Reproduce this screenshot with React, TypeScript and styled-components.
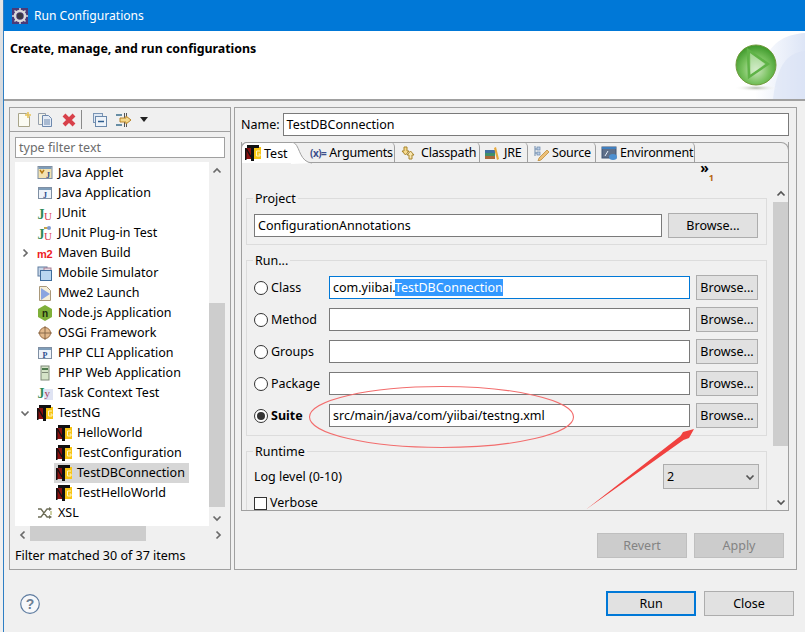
import React from 'react';
import styled, { createGlobalStyle } from 'styled-components';

const FONT = `"Noto Sans", "Open Sans", sans-serif`;

const Global = createGlobalStyle`
  html, body { margin: 0; padding: 0; background: #f0f0f0; }
  body { font-family: ${FONT}; font-size: 12.5px; color: #000; overflow: hidden; }
  * { box-sizing: border-box; }
`;

const Page = styled.div`
  position: relative;
  display: flex;
  width: 805px;
  height: 632px;
  overflow: hidden;
`;

const Desktop = styled.div`
  width: 3px;
  flex: none;
  background: linear-gradient(#e6e6e6 0, #d5d9de 100px, #e9e9e9 230px, #f0f0f0 340px);
`;

const Win = styled.div`
  flex: 1;
  min-width: 0;
  display: flex;
  flex-direction: column;
  border-left: 1px solid #2f7fc4;
  background: #f0f0f0;
`;

const TitleBar = styled.div`
  height: 31px;
  flex: none;
  display: flex;
  align-items: center;
  gap: 6px;
  padding-left: 8px;
  background: #0078d7;
  color: #fff;
  font-size: 12.1px;
`;

const Banner = styled.div`
  height: 70px;
  flex: none;
  display: flex;
  justify-content: space-between;
  background: #fff;
  border-bottom: 2px solid #a0a0a0;
`;

const BannerTitle = styled.div`
  padding: 9px 0 0 6px;
  font-weight: 700;
  font-size: 12.4px;
  line-height: 18px;
`;

const Body = styled.div`
  display: flex;
  flex: none;
  gap: 3px;
  padding: 6px 8px 0 5px;
`;

const Panel = styled.div<{ $w: number }>`
  width: ${p => p.$w}px;
  height: 463px;
  flex: none;
  border: 1px solid #a0a0a0;
  display: flex;
  flex-direction: column;
`;

const Toolbar = styled.div`
  height: 24px;
  flex: none;
  display: flex;
  align-items: center;
  border-bottom: 1px solid #a0a0a0;
`;

const ToolIcon = styled.span<{ $left: number }>`
  display: flex;
  margin-left: ${p => p.$left}px;
`;

const ToolSep = styled.span`
  width: 1px;
  height: 19px;
  margin-left: 4px;
  background: #8a8a8a;
`;

const FilterBox = styled.div`
  height: 21px;
  flex: none;
  margin: 5px 5px 0;
  border: 1px solid #a0a0a0;
  background: #fff;
  color: #6d6d6d;
  padding-left: 3px;
  line-height: 19px;
`;

const TreeArea = styled.div`
  height: 364px;
  flex: none;
  margin: 4px 5px 0;
  display: flex;
  background: #fff;
`;

const TreeList = styled.div`
  flex: 1;
  min-width: 0;
  padding-top: 1px;
`;

const TreeRow = styled.div<{ $child?: boolean }>`
  height: 20px;
  display: flex;
  align-items: center;
  padding-left: ${p => (p.$child ? 39 : 5)}px;
  white-space: nowrap;
`;

const Twist = styled.span`
  width: 15px;
  flex: none;
  display: flex;
`;

const TreeLabel = styled.span<{ $selected?: boolean }>`
  height: 20px;
  display: flex;
  align-items: center;
  gap: 5px;
  padding: 0 4px 0 2px;
  background: ${p => (p.$selected ? '#d6d6d6' : 'transparent')};
`;

const TreeText = styled.span`
  line-height: 20px;
`;

const VBar = styled.div<{ $w: number }>`
  width: ${p => p.$w}px;
  flex: none;
  display: flex;
  flex-direction: column;
  background: #f0f0f0;
`;

const HBar = styled.div`
  height: 15px;
  flex: none;
  margin: 0 5px;
  display: flex;
  align-items: stretch;
  background: #f0f0f0;
`;

const BarArrow = styled.span`
  flex: none;
  display: flex;
  align-items: center;
  justify-content: center;
  min-width: 15px;
  min-height: 17px;
`;

const BarGap = styled.span<{ $grow?: boolean; $size?: number }>`
  flex: ${p => (p.$grow ? '1' : 'none')};
  height: ${p => p.$size ?? 0}px;
`;

const Thumb = styled.span<{ $w?: number; $h?: number }>`
  flex: none;
  display: block;
  background: #cdcdcd;
  width: ${p => (p.$w ? `${p.$w}px` : 'auto')};
  height: ${p => (p.$h ? `${p.$h}px` : 'auto')};
`;

const Status = styled.div`
  padding: 6px 0 0 5px;
  line-height: 18px;
  white-space: nowrap;
`;

const RightInner = styled.div`
  display: flex;
  flex-direction: column;
  padding: 5px 7px 0 6px;
  height: 100%;
`;

const NameRow = styled.div`
  display: flex;
  align-items: center;
  gap: 3px;
`;

const Field = styled.div<{ $w?: number; $focus?: boolean }>`
  height: 23px;
  ${p => (p.$w ? `width: ${p.$w}px;` : 'flex: 1;')}
  min-width: 0;
  background: #fff;
  border: 1px solid ${p => (p.$focus ? '#0078d7' : '#7a7a7a')};
  padding-left: 3px;
  line-height: 21px;
  white-space: nowrap;
`;

const Selected = styled.span`
  background: #3399ff;
  color: #fff;
`;

const Folder = styled.div`
  margin-top: 6px;
  height: 369px;
  flex: none;
  border-left: 1px solid #a0a0a0;
  border-right: 1px solid #a0a0a0;
  border-bottom: 1px solid #a0a0a0;
  display: flex;
  flex-direction: column;
`;

const TabStrip = styled.div`
  height: 21px;
  flex: none;
  margin: 0 -1px;
  display: flex;
  border-top: 1px solid #a0a0a0;
  border-right: 1px solid #a0a0a0;
  border-bottom: 1px solid #a0a0a0;
  border-top-right-radius: 8px;
  border-top-left-radius: 6px;
`;

const Tab = styled.div<{ $w: number; $pad?: number; $gap?: number }>`
  width: ${p => p.$w}px;
  height: 21px;
  margin-top: -1px;
  flex: none;
  display: flex;
  align-items: center;
  gap: ${p => p.$gap ?? 4}px;
  padding-left: ${p => p.$pad ?? 5}px;
  white-space: nowrap;
  letter-spacing: -0.2px;
  border-right: 1px solid #a0a0a0;
  border-top-right-radius: 5px;
`;

const ActiveTab = styled.div`
  position: relative;
  width: 69px;
  height: 21px;
  margin-top: -1px;
  flex: none;
  z-index: 1;
  display: flex;
  align-items: center;
  gap: 3px;
  padding-left: 3px;
  white-space: nowrap;
  border-left: 1px solid #a0a0a0;
  border-top: 1px solid #a0a0a0;
  border-top-left-radius: 6px;
  background: linear-gradient(90deg, #fff 0, #fff 52px, transparent 52px);
`;

const TabCurve = styled.svg`
  position: absolute;
  right: -3px;
  top: -1px;
`;

const ArgsGlyph = styled.span`
  color: #3d4f8c;
  font-weight: 700;
  font-size: 10px;
  letter-spacing: -0.5px;
`;

const StripExtra = styled.div`
  height: 22px;
  flex: none;
  display: flex;
  justify-content: flex-end;
  padding-right: 74px;
`;

const Overflow = styled.div`
  display: flex;
  align-items: flex-start;
  font-weight: 700;
  font-size: 14px;
  line-height: 9px;
`;

const OverflowCount = styled.span`
  color: #b5660d;
  font-weight: 700;
  font-size: 9px;
  margin-top: 10px;
  line-height: 9px;
`;

const FolderBody = styled.div`
  flex: 1;
  min-height: 0;
  display: flex;
`;

const ScrollContent = styled.div`
  flex: 1;
  min-width: 0;
  overflow: hidden;
  padding: 5px 6px 0 4px;
`;

const Group = styled.fieldset<{ $top?: number; $bottom?: number }>`
  margin: 0 0 7px;
  border: 1px solid #dcdcdc;
  padding: ${p => p.$top ?? 6}px 8px ${p => p.$bottom ?? 7}px 7px;
  min-width: 0;
`;

const Legend = styled.legend`
  margin-left: -1px;
  padding: 0 2px;
  line-height: 17px;
  font-size: 12.5px;
`;

const FlexRow = styled.div`
  display: flex;
  gap: 6px;
  align-items: center;
`;

const RunGrid = styled.div`
  display: grid;
  grid-template-columns: 75px 361px 68px;
  row-gap: 7px;
  align-items: center;
`;

const BrowseCell = styled.div`
  margin-left: 6px;
  width: 62px;
`;

const Btn = styled.button<{ $w?: number; $default?: boolean }>`
  width: ${p => p.$w ?? 90}px;
  height: 25px;
  flex: none;
  padding: 0;
  font: inherit;
  color: #000;
  background: #e1e1e1;
  border: ${p => (p.$default ? '2px solid #0078d7' : '1px solid #adadad')};
  border-radius: 0;
  &:disabled {
    background: #cccccc;
    border-color: #bfbfbf;
    color: #838383;
  }
`;

const Choice = styled.label<{ $on?: boolean }>`
  display: flex;
  align-items: center;
  gap: 3px;
  line-height: 14px;
  font-weight: ${p => (p.$on ? 700 : 400)};
`;

const Radio = styled.span<{ $on?: boolean }>`
  width: 14px;
  height: 14px;
  flex: none;
  border-radius: 50%;
  background: #fff;
  border: 1px solid #333;
  display: flex;
  align-items: center;
  justify-content: center;
  &::after {
    content: '';
    display: ${p => (p.$on ? 'block' : 'none')};
    width: 8px;
    height: 8px;
    border-radius: 50%;
    background: #333;
  }
`;

const Check = styled.span`
  width: 13px;
  height: 13px;
  flex: none;
  background: #fff;
  border: 1px solid #333;
`;

const LogRow = styled.div`
  display: flex;
  justify-content: space-between;
  align-items: center;
  height: 25px;
  margin-right: -1px;
`;

const Select = styled.div`
  width: 96px;
  height: 25px;
  background: #e1e1e1;
  border: 1px solid #adadad;
  display: flex;
  align-items: center;
  justify-content: space-between;
  padding: 0 3px;
`;

const VerboseRow = styled.div`
  margin-top: 7px;
`;

const ApplyRow = styled.div`
  display: flex;
  justify-content: flex-end;
  gap: 7px;
  margin-top: 22px;
  padding-right: 5px;
`;

const Footer = styled.div`
  display: flex;
  align-items: center;
  padding: 21px 11px 0 16px;
  gap: 8px;
`;

const FooterSpace = styled.div`
  flex: 1;
`;

const Annotation = styled.svg`
  position: absolute;
  left: 0;
  top: 0;
  pointer-events: none;
`;

const Small = ({ children, w = 16, h = 16 }: { children: React.ReactNode; w?: number; h?: number }) => (
  <svg width={w} height={h} viewBox={`0 0 ${w} ${h}`} style={{ flex: 'none', display: 'block' }}>{children}</svg>
);

const TestNG = () => (
  <Small>
    <rect x="0" y="3" width="6" height="11" fill="#8a0f0f" />
    <path d="M0 3h1.500v12H0z" fill="#111" />
    <path d="M1.500 4l4.500 8" stroke="#111" strokeWidth="1.400" />
    <rect x="9" y="2" width="7" height="12" fill="#f7c514" />
    <path d="M2 0h12v3H2z" fill="#111" />
    <path d="M6 2h3v14H6z" fill="#111" />
    <path d="M15 6h-3.500v5H15V9h-1.500" fill="none" stroke="#fff6c4" strokeWidth="1" />
  </Small>
);

const WinIcon = ({ letter, bar = '#7f9db9' }: { letter: string; bar?: string }) => (
  <Small>
    <rect x="1.500" y="2.500" width="13" height="11" fill="#eef3fa" stroke="#7f8fa3" />
    <rect x="2" y="3" width="12" height="2" fill={bar} />
    <text x="8" y="12.500" fontSize="8" fontWeight="700" fontFamily="Liberation Serif" textAnchor="middle" fill="#2c4c8c">{letter}</text>
  </Small>
);

const AppletIcon = () => (
  <Small>
    <rect x="1" y="1.500" width="14" height="12" fill="#f3e2b0" stroke="#7f8fa3" />
    <rect x="1.500" y="2" width="13" height="2" fill="#7f9db9" />
    <path d="M3 5l2 3 2-3" fill="none" stroke="#b57a14" strokeWidth="1.500" />
    <text x="11" y="12.500" fontSize="8" fontWeight="700" fontFamily="Liberation Serif" textAnchor="middle" fill="#2c4c8c">J</text>
  </Small>
);

const JUnitIcon = ({ plug }: { plug?: boolean }) => (
  <Small>
    {plug && <path d="M7 3h5" stroke="#c9a64a" strokeWidth="2" />}
    {plug && <circle cx="12" cy="3" r="2" fill="#7f9bd1" />}
    <text x="0.500" y="14" fontSize="14" fontWeight="700" fontFamily="Liberation Serif" fill="#2f8a56">J</text>
    <text x="7" y="15" fontSize="11" fontFamily="Liberation Serif" fill="#d9404f">U</text>
  </Small>
);

const MavenIcon = () => (
  <Small>
    <text x="0" y="12.500" fontSize="11" fontWeight="700" fontFamily="Liberation Sans" letterSpacing="-0.3" fill="#ee1c25">m2</text>
  </Small>
);

const MobileIcon = () => (
  <Small>
    <rect x="1" y="2" width="9" height="9" fill="#c7d6e8" stroke="#5f7ca0" />
    <rect x="7" y="3" width="7" height="7" fill="#e7d9e2" stroke="#a77f92" />
    <rect x="3.500" y="5.500" width="11" height="10" fill="#b9d7f0" stroke="#3f6d9c" />
  </Small>
);

const MweIcon = () => (
  <Small>
    <path d="M2.500 1.500h7l4 4v10h-11z" fill="#f6efd9" stroke="#a9987a" />
    <path d="M4 3l9 6-9 6z" fill="#8aa5e0" />
  </Small>
);

const NodeIcon = () => (
  <Small>
    <path d="M8 0l7 4v8l-7 4-7-4V4z" fill="#7fb03a" />
    <text x="8" y="12" fontSize="10" fontWeight="700" fontFamily="Liberation Sans" textAnchor="middle" fill="#1d2b0d">n</text>
  </Small>
);

const OsgiIcon = () => (
  <Small>
    <circle cx="8" cy="8" r="5.500" fill="#e2b98c" stroke="#9a6f47" />
    <path d="M8 1v14M1 8h14" stroke="#8a6a4a" strokeWidth="1" />
  </Small>
);

const PhpWebIcon = () => (
  <Small>
    <rect x="4" y="1" width="8" height="14" fill="#d5e3c8" stroke="#7f8a78" />
    <rect x="5" y="3" width="6" height="2" fill="#4d7a4d" />
    <rect x="5" y="7" width="6" height="1" fill="#7f8a78" />
  </Small>
);

const TaskIcon = () => (
  <Small>
    <rect x="7" y="4" width="9" height="11" fill="#dfe3f3" />
    <text x="0.500" y="13" fontSize="14" fontWeight="700" fontFamily="Liberation Serif" fill="#2f8a56">J</text>
    <text x="7.500" y="12" fontSize="11" fontFamily="Liberation Serif" fill="#a33a5c">y</text>
  </Small>
);

const XslIcon = () => (
  <Small>
    <path d="M1 4h3l6 8h3M1 12h3l6-8h3" fill="none" stroke="#6e6e58" strokeWidth="1.300" />
    <path d="M12 2l3 2-3 2zM12 10l3 2-3 2z" fill="#6e6e58" />
    <path d="M14 6v4" stroke="#9aa04a" strokeWidth="1" />
  </Small>
);

const Chevron = ({ dir, color = '#6a6a6a', size = 10 }: { dir: 'up' | 'down' | 'left' | 'right'; color?: string; size?: number }) => {
  const d = {
    up: 'M1.500 6.500L5 3l3.500 3.500',
    down: 'M1.500 3.500L5 7l3.500-3.500',
    left: 'M6.500 1.500L3 5l3.500 3.500',
    right: 'M3.500 1.500L7 5 3.500 8.500',
  }[dir];
  return (
    <svg width={size} height={size} viewBox="0 0 10 10" style={{ display: 'block' }}>
      <path d={d} fill="none" stroke={color} strokeWidth="1.700" />
    </svg>
  );
};

type Item = { label: string; icon: React.ReactNode; twist?: 'right' | 'down'; child?: boolean; selected?: boolean };

const items: Item[] = [
  { label: 'Java Applet', icon: <AppletIcon /> },
  { label: 'Java Application', icon: <WinIcon letter="J" /> },
  { label: 'JUnit', icon: <JUnitIcon /> },
  { label: 'JUnit Plug-in Test', icon: <JUnitIcon plug /> },
  { label: 'Maven Build', icon: <MavenIcon />, twist: 'right' },
  { label: 'Mobile Simulator', icon: <MobileIcon /> },
  { label: 'Mwe2 Launch', icon: <MweIcon /> },
  { label: 'Node.js Application', icon: <NodeIcon /> },
  { label: 'OSGi Framework', icon: <OsgiIcon /> },
  { label: 'PHP CLI Application', icon: <WinIcon letter="P" /> },
  { label: 'PHP Web Application', icon: <PhpWebIcon /> },
  { label: 'Task Context Test', icon: <TaskIcon /> },
  { label: 'TestNG', icon: <TestNG />, twist: 'down' },
  { label: 'HelloWorld', icon: <TestNG />, child: true },
  { label: 'TestConfiguration', icon: <TestNG />, child: true },
  { label: 'TestDBConnection', icon: <TestNG />, child: true, selected: true },
  { label: 'TestHelloWorld', icon: <TestNG />, child: true },
  { label: 'XSL', icon: <XslIcon /> },
];

const runRows = [
  { label: 'Class', focus: true, value: <>com.yiibai.<Selected>TestDBConnection</Selected></> },
  { label: 'Method' },
  { label: 'Groups' },
  { label: 'Package' },
  { label: 'Suite', on: true, value: 'src/main/java/com/yiibai/testng.xml' },
];

const GearLogo = () => (
  <Small>
    <rect width="16" height="16" fill="#4a3a78" />
    <circle cx="8" cy="8" r="5" fill="none" stroke="#d9d9d9" strokeWidth="2.500" />
    <path d="M8 0v3M8 13v3M0 8h3M13 8h3M2.500 2.500l2 2M11.500 11.500l2 2M13.500 2.500l-2 2M4.500 11.500l-2 2" stroke="#d9d9d9" strokeWidth="1.500" />
    <circle cx="8" cy="8" r="3" fill="#3a3a44" />
  </Small>
);

const BannerArt = () => (
  <svg width="90" height="68" viewBox="0 0 90 68" style={{ display: 'block' }}>
    <defs>
      <linearGradient id="wash" x1="0" x2="1" y1="0" y2="0">
        <stop offset="0" stopColor="#ffffff" />
        <stop offset="1" stopColor="#dde5f6" />
      </linearGradient>
      <radialGradient id="ball" cx="0.5" cy="0.62" r="0.6">
        <stop offset="0" stopColor="#cfe8c2" />
        <stop offset="0.55" stopColor="#79c25f" />
        <stop offset="1" stopColor="#3f9a2c" />
      </radialGradient>
      <radialGradient id="shade" cx="0.5" cy="0.5" r="0.5">
        <stop offset="0" stopColor="#b5bcae" />
        <stop offset="1" stopColor="#ffffff" stopOpacity="0" />
      </radialGradient>
    </defs>
    <path d="M90 2C60 4 46 20 40 68h50z" fill="url(#wash)" />
    <path d="M90 20C72 22 62 34 58 68h32z" fill="#dbe3f5" opacity=".6" />
    <ellipse cx="41" cy="57" rx="22" ry="3.500" fill="url(#shade)" />
    <circle cx="41" cy="34" r="20" fill="url(#ball)" stroke="#6f9a3a" strokeWidth="1" />
    <path d="M33 19l20 14-19 13z" fill="none" stroke="#5fb347" strokeWidth="2.500" />
    <path d="M35 22l15 11-14 10z" fill="#d6efcd" opacity=".55" />
  </svg>
);

const HelpIcon = () => (
  <Small w={20} h={20}>
    <circle cx="10" cy="10" r="9.300" fill="#f7f8fa" stroke="#5e7ca0" strokeWidth="1.200" />
    <text x="10" y="15" fontSize="14" fontWeight="700" fontFamily="Liberation Sans" textAnchor="middle" fill="#6d7f94">?</text>
  </Small>
);

export default function App() {
  return (
    <Page>
      <Global />
      <Desktop />
      <Win>
        <TitleBar><GearLogo />Run Configurations</TitleBar>
        <Banner>
          <BannerTitle>Create, manage, and run configurations</BannerTitle>
          <BannerArt />
        </Banner>
        <Body>
          <Panel $w={222}>
            <Toolbar>
              <ToolIcon $left={6}>
                <Small><path d="M2.500 1.500h8l3 3v10h-11z" fill="#fbfbf3" stroke="#a9a58a" /><path d="M12 0v6M9 3h6" stroke="#e6c45a" strokeWidth="1.600" /></Small>
              </ToolIcon>
              <ToolIcon $left={5}>
                <Small><path d="M1.500 1.500h7v11h-7z" fill="#f4f3e9" stroke="#96a0ad" /><path d="M5.500 3.500h6l3 3v8h-9z" fill="#e5ecf6" stroke="#6d88ad" /><path d="M7 8h6M7 10h6M7 12h6" stroke="#6d88ad" /></Small>
              </ToolIcon>
              <ToolIcon $left={8}>
                <Small><path d="M3 3l10 10M13 3L3 13" stroke="#d8414a" strokeWidth="4" /></Small>
              </ToolIcon>
              <ToolSep />
              <ToolIcon $left={10}>
                <Small><rect x="1.500" y="1.500" width="9" height="9" fill="#dfe8f3" stroke="#7a95b5" /><rect x="3.500" y="4.500" width="11" height="10" fill="#eef3f9" stroke="#6a88ab" /><path d="M6 9.500h6" stroke="#2e5d8f" strokeWidth="1.500" /></Small>
              </ToolIcon>
              <ToolIcon $left={7}>
                <Small w={18}><path d="M1 3h6M1 13h6" stroke="#3a6d8c" strokeWidth="1.300" /><path d="M9.500 1v14M11.500 1v3M11.500 12v3" stroke="#555" /><path d="M5 6h6V4l5 4-5 4v-2H5z" fill="#f5d98c" stroke="#b8842a" /></Small>
              </ToolIcon>
              <ToolIcon $left={7}>
                <Small w={9} h={6}><path d="M0 0h8L4 5z" fill="#222" /></Small>
              </ToolIcon>
            </Toolbar>
            <FilterBox>type filter text</FilterBox>
            <TreeArea>
              <TreeList>
                {items.map(it => (
                  <TreeRow key={it.label} $child={it.child}>
                    {!it.child && <Twist>{it.twist && <Chevron dir={it.twist} />}</Twist>}
                    <TreeLabel $selected={it.selected}>
                      {it.icon}
                      <TreeText>{it.label}</TreeText>
                    </TreeLabel>
                  </TreeRow>
                ))}
              </TreeList>
              <VBar $w={16}>
                <BarArrow><Chevron dir="up" /></BarArrow>
                <BarGap $size={124} />
                <Thumb $h={204} />
                <BarGap $grow />
                <BarArrow><Chevron dir="down" /></BarArrow>
              </VBar>
            </TreeArea>
            <HBar>
              <BarArrow><Chevron dir="left" /></BarArrow>
              <Thumb $w={116} />
              <BarGap $grow />
              <BarArrow><Chevron dir="right" /></BarArrow>
            </HBar>
            <Status>Filter matched 30 of 37 items</Status>
          </Panel>
          <Panel $w={563}>
            <RightInner>
              <NameRow>Name:<Field>TestDBConnection</Field></NameRow>
              <Folder>
                <TabStrip>
                  <ActiveTab>
                    <TestNG />Test
                    <TabCurve width="22" height="22" viewBox="0 0 22 22">
                      <path d="M0 0.500C2 .5 3 .5 4 1.500C9 6 9 20 21 21L0 22z" fill="#fff" />
                      <path d="M0 0.500C2 .5 3 .5 4 1.500C9 6 9 20 21 21" fill="none" stroke="#a0a0a0" />
                    </TabCurve>
                  </ActiveTab>
                  <Tab $w={85} $pad={0} $gap={3}><ArgsGlyph>(x)=</ArgsGlyph>Arguments</Tab>
                  <Tab $w={85} $pad={6}>
                    <Small><path d="M3 2h3v4h2l-3.500 4L1 6h2z" fill="#f5d98c" stroke="#a8842a" /><path d="M11 14h-3v-4H6l3.500-4L13 10h-2z" fill="#f7e6b0" stroke="#a8842a" /></Small>
                    Classpath
                  </Tab>
                  <Tab $w={48} $pad={4}>
                    <Small><rect x="1" y="11" width="10" height="3" fill="#a8683a" /><rect x="1" y="8" width="10" height="3" fill="#3f8f6a" /><rect x="1" y="5" width="10" height="3" fill="#3f6fa0" /><path d="M10 3l2-1 3 12-2 1z" fill="#e8a83a" /></Small>
                    JRE
                  </Tab>
                  <Tab $w={68} $gap={3}>
                    <Small><path d="M2 1v10M2 4h3M2 8h3" stroke="#6a88ab" /><rect x="4" y="2" width="3" height="3" fill="#b9cde6" stroke="#6a88ab" strokeWidth=".7" /><rect x="4" y="7" width="3" height="3" fill="#b9cde6" stroke="#6a88ab" strokeWidth=".7" /><path d="M14 5l2 2-8 8-3 1 1-3z" fill="#edc078" stroke="#b8842a" strokeWidth=".7" /></Small>
                    Source
                  </Tab>
                  <Tab $w={99} $gap={3}>
                    <Small><rect x="1" y="2" width="14" height="11" fill="#5f6f88" stroke="#3f5575" /><rect x="1" y="2" width="14" height="2" fill="#3f7fbf" /><path d="M4 11l3-5" stroke="#e6eef8" /><ellipse cx="12" cy="12" rx="4" ry="3" fill="#4d8fd0" /></Small>
                    Environment
                  </Tab>
                </TabStrip>
                <StripExtra>
                  <Overflow>»<OverflowCount>1</OverflowCount></Overflow>
                </StripExtra>
                <FolderBody>
                  <ScrollContent>
                    <Group $bottom={6}>
                      <Legend>Project</Legend>
                      <FlexRow>
                        <Field>ConfigurationAnnotations</Field>
                        <Btn>Browse...</Btn>
                      </FlexRow>
                    </Group>
                    <Group>
                      <Legend>Run...</Legend>
                      <RunGrid>
                        {runRows.map(r => (
                          <React.Fragment key={r.label}>
                            <Choice $on={r.on}><Radio $on={r.on} />{r.label}</Choice>
                            <Field $focus={r.focus}>{r.value}</Field>
                            <BrowseCell><Btn $w={62}>Browse...</Btn></BrowseCell>
                          </React.Fragment>
                        ))}
                      </RunGrid>
                    </Group>
                    <Group $top={4}>
                      <Legend>Runtime</Legend>
                      <LogRow>
                        Log level (0-10)
                        <Select>2<Chevron dir="down" color="#555" /></Select>
                      </LogRow>
                      <VerboseRow><Choice><Check />Verbose</Choice></VerboseRow>
                    </Group>
                  </ScrollContent>
                  <VBar $w={15}>
                    <BarArrow><Chevron dir="up" color="#555" /></BarArrow>
                    <Thumb $h={244} />
                    <BarGap $grow />
                    <BarArrow><Chevron dir="down" color="#555" /></BarArrow>
                  </VBar>
                </FolderBody>
              </Folder>
              <ApplyRow>
                <Btn disabled>Revert</Btn>
                <Btn disabled>Apply</Btn>
              </ApplyRow>
            </RightInner>
          </Panel>
        </Body>
        <Footer>
          <HelpIcon />
          <FooterSpace />
          <Btn $default>Run</Btn>
          <Btn>Close</Btn>
        </Footer>
      </Win>
      <Annotation width="805" height="632" viewBox="0 0 805 632">
        <ellipse cx="441.500" cy="417" rx="132" ry="30.500" fill="none" stroke="#f26d6d" strokeWidth="1.100" />
        <path d="M586 509.500L680.500 436l2.500-4 11-3-5 9-5.500 2z" fill="#f0413f" />
      </Annotation>
    </Page>
  );
}
